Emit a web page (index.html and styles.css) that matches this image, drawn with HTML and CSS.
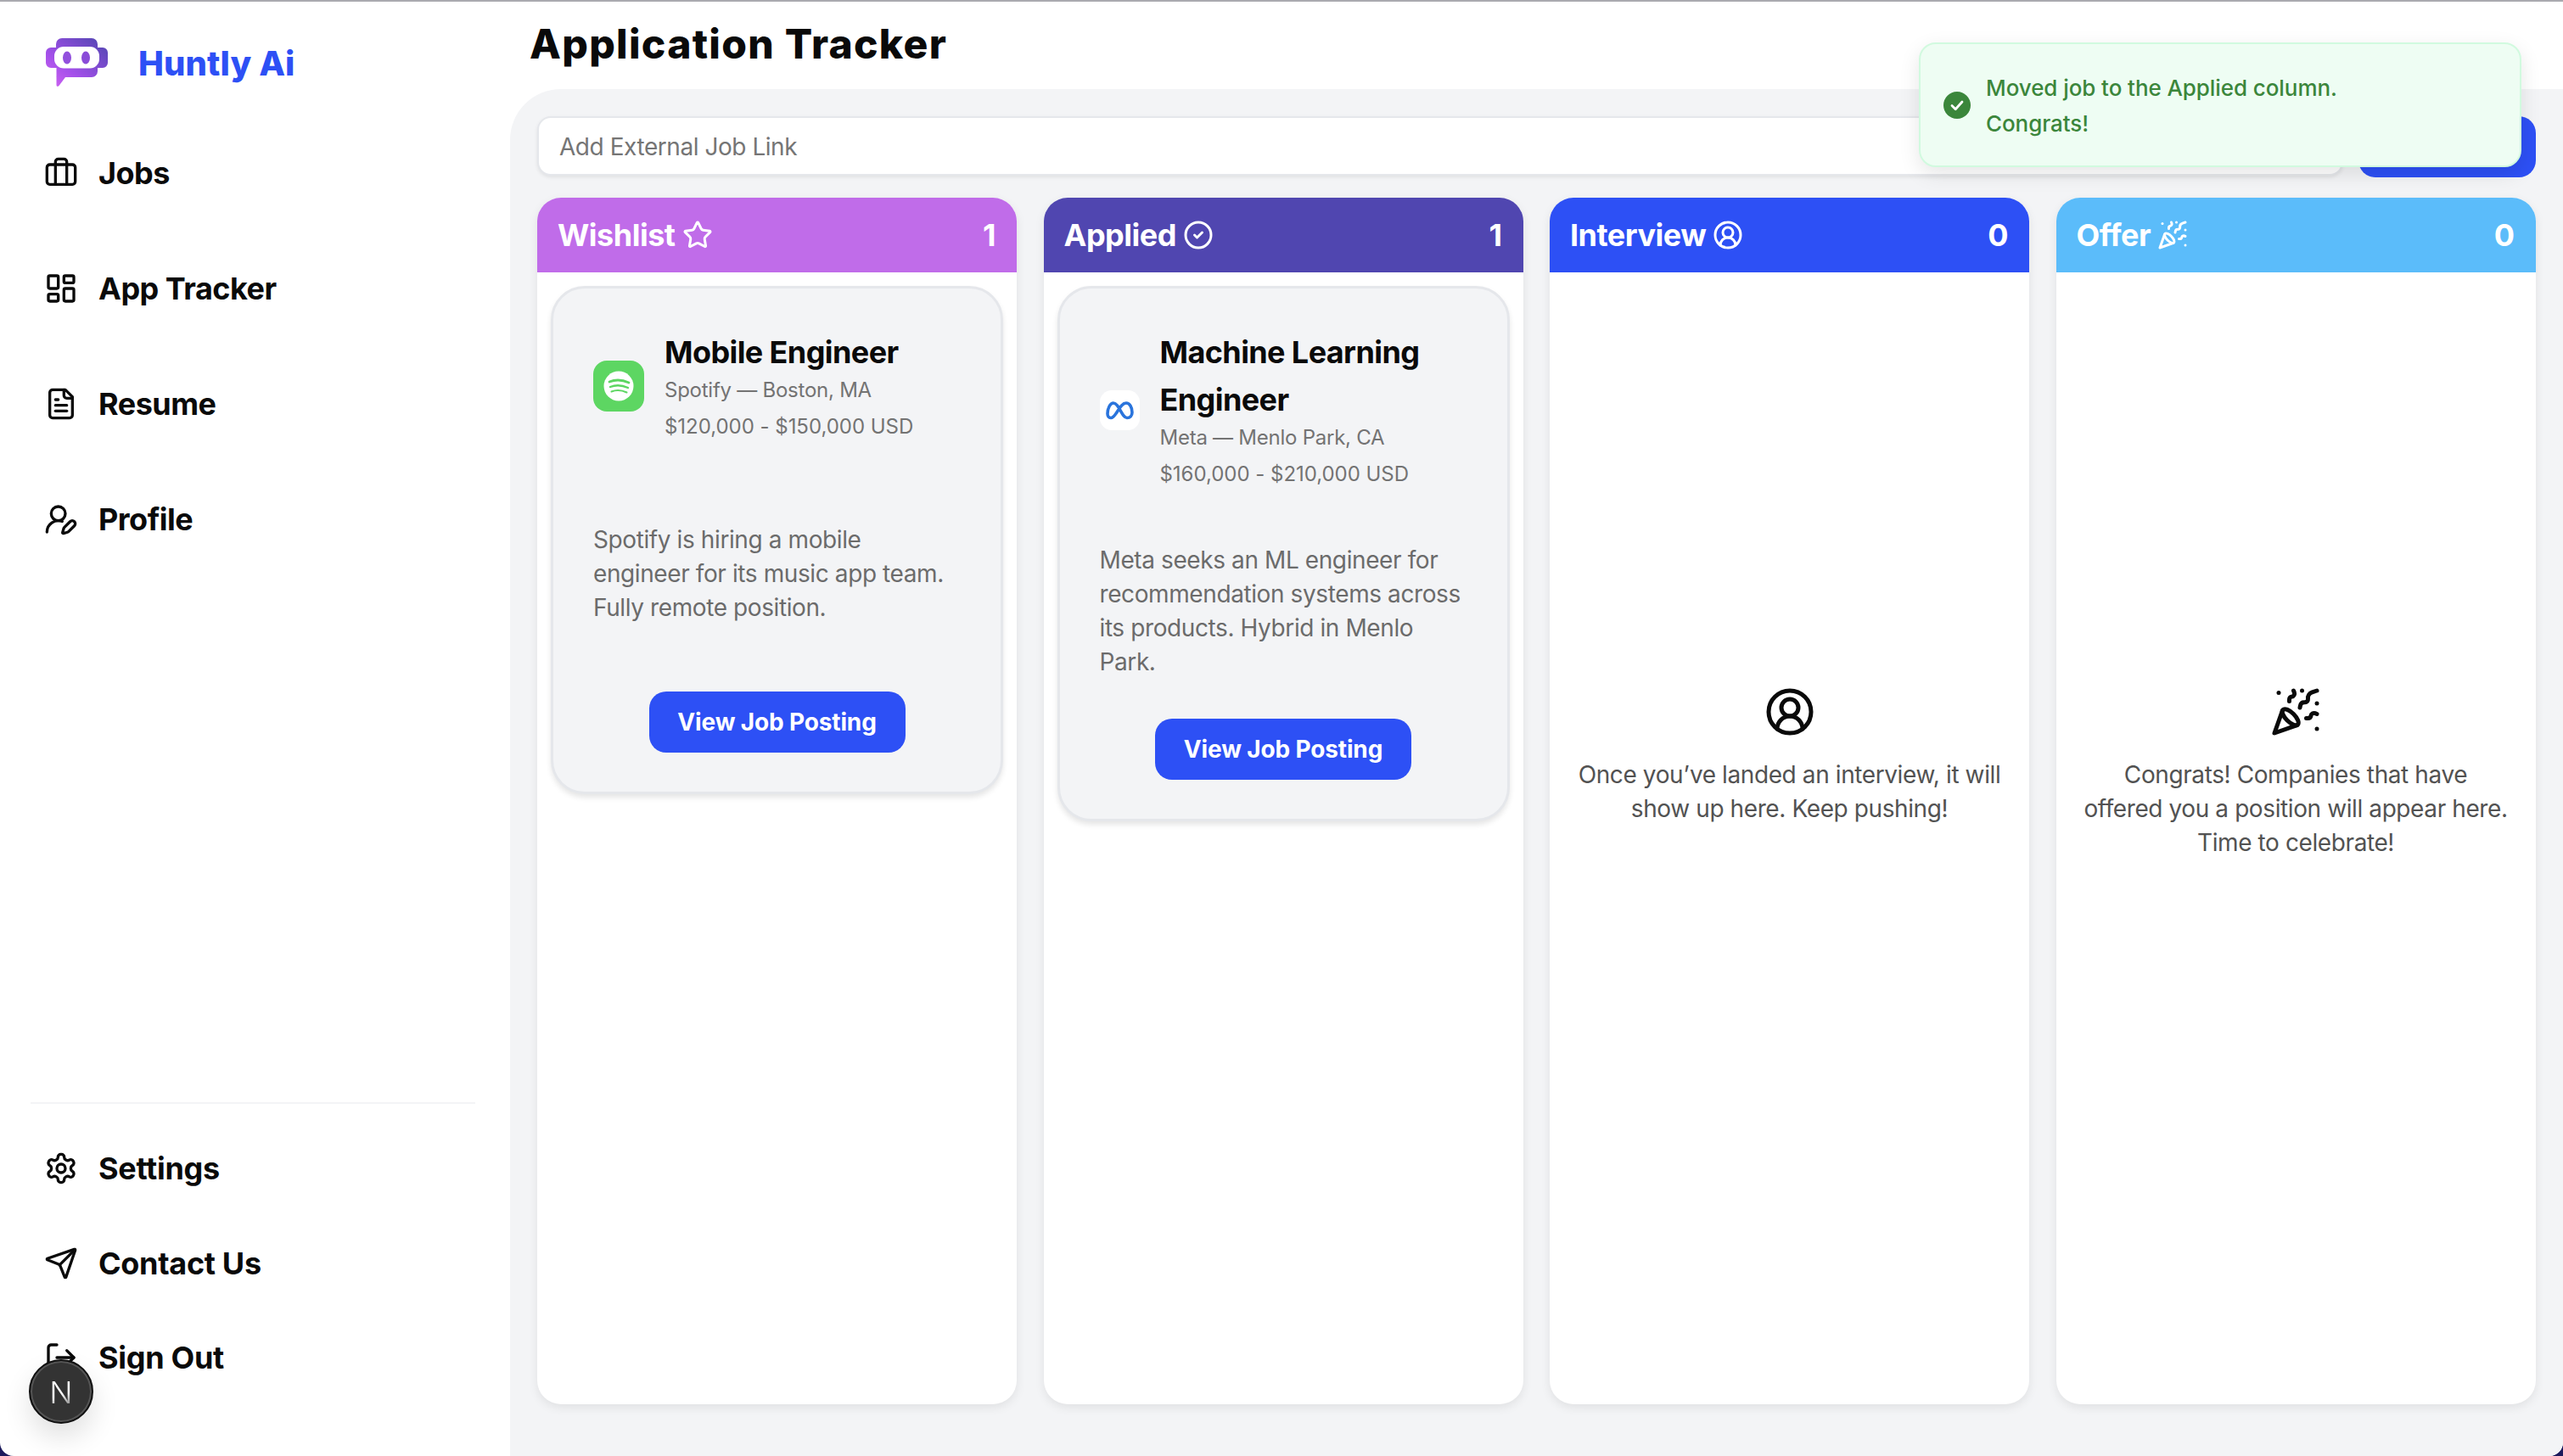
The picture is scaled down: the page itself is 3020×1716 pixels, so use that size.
FILE: index.html
```html
<!DOCTYPE html>
<html lang="en">
<head>
<meta charset="utf-8">
<title>Application Tracker</title>
<link rel="stylesheet" href="styles.css">
</head>
<body>
<div class="app">
  <aside class="sidebar">
    <div class="brand">
      <svg class="brand-logo" viewBox="0 0 74 58">
        <defs><linearGradient id="lg" x1="0" y1="1" x2="1" y2="0"><stop offset="0" stop-color="#d465f2"/><stop offset=".35" stop-color="#a450ea"/><stop offset="1" stop-color="#4d45ae"/></linearGradient></defs>
        <path fill="url(#lg)" d="M19 0h35a7 7 0 0 1 7 7v4h6a6 6 0 0 1 6 6v12a6 6 0 0 1-6 6h-6v4a7 7 0 0 1-7 7H23L15.500 56c-1.500 1.500-3 1-3-1V46a2 2 0 0 1 0-1V35H6a6 6 0 0 1-6-6V17a6 6 0 0 1 6-6h6V7a7 7 0 0 1 7-7z"/>
        <rect x="10" y="10" width="53" height="25.500" rx="11" fill="#fff"/>
        <ellipse cx="25" cy="23" rx="5" ry="7.500" fill="#9250dd"/>
        <ellipse cx="47" cy="23" rx="5" ry="7.500" fill="#8a4cd8"/>
      </svg>
      <span class="brand-name">Huntly Ai</span>
    </div>
    <nav class="nav">
      <a class="nav-item"><svg class="ico nav-ico" viewBox="0 0 24 24"><path d="M16 20V4a2 2 0 0 0-2-2h-4a2 2 0 0 0-2 2v16"/><rect width="20" height="14" x="2" y="6" rx="2"/></svg><span>Jobs</span></a>
      <a class="nav-item"><svg class="ico nav-ico" viewBox="0 0 24 24"><rect width="7" height="9" x="3" y="3" rx="1"/><rect width="7" height="5" x="14" y="3" rx="1"/><rect width="7" height="9" x="14" y="12" rx="1"/><rect width="7" height="5" x="3" y="16" rx="1"/></svg><span>App Tracker</span></a>
      <a class="nav-item"><svg class="ico nav-ico" viewBox="0 0 24 24"><path d="M15 2H6a2 2 0 0 0-2 2v16a2 2 0 0 0 2 2h12a2 2 0 0 0 2-2V7Z"/><path d="M14 2v4a2 2 0 0 0 2 2h4"/><path d="M10 9H8"/><path d="M16 13H8"/><path d="M16 17H8"/></svg><span>Resume</span></a>
      <a class="nav-item"><svg class="ico nav-ico" viewBox="0 0 24 24"><path d="M2 21a8 8 0 0 1 10.821-7.487"/><path d="M21.378 16.626a1 1 0 0 0-3.004-3.004l-4.010 4.012a2 2 0 0 0-.506.854l-.837 2.870a.5.5 0 0 0 .620.620l2.870-.837a2 2 0 0 0 .854-.506z"/><circle cx="10" cy="8" r="5"/></svg><span>Profile</span></a>
    </nav>
    <div class="sidebar-foot">
      <a class="nav-item foot-item"><svg class="ico nav-ico" viewBox="0 0 24 24"><path d="M12.220 2h-.44a2 2 0 0 0-2 2v.18a2 2 0 0 1-1 1.730l-.43.25a2 2 0 0 1-2 0l-.15-.08a2 2 0 0 0-2.730.73l-.22.38a2 2 0 0 0 .73 2.730l.15.1a2 2 0 0 1 1 1.720v.51a2 2 0 0 1-1 1.740l-.15.09a2 2 0 0 0-.73 2.730l.22.38a2 2 0 0 0 2.730.73l.15-.08a2 2 0 0 1 2 0l.43.25a2 2 0 0 1 1 1.730V20a2 2 0 0 0 2 2h.44a2 2 0 0 0 2-2v-.18a2 2 0 0 1 1-1.730l.43-.25a2 2 0 0 1 2 0l.15.08a2 2 0 0 0 2.730-.73l.22-.39a2 2 0 0 0-.73-2.730l-.15-.08a2 2 0 0 1-1-1.740v-.5a2 2 0 0 1 1-1.740l.15-.09a2 2 0 0 0 .73-2.730l-.22-.38a2 2 0 0 0-2.730-.73l-.15.08a2 2 0 0 1-2 0l-.43-.25a2 2 0 0 1-1-1.730V4a2 2 0 0 0-2-2z"/><circle cx="12" cy="12" r="3"/></svg><span>Settings</span></a>
      <a class="nav-item foot-item"><svg class="ico nav-ico" viewBox="0 0 24 24"><path d="M14.536 21.686a.5.5 0 0 0 .937-.024l6.500-19a.496.496 0 0 0-.635-.635l-19 6.500a.5.5 0 0 0-.024.937l7.930 3.180a2 2 0 0 1 1.112 1.110z"/><path d="m21.854 2.147-10.940 10.939"/></svg><span>Contact Us</span></a>
      <a class="nav-item foot-item"><svg class="ico nav-ico" viewBox="0 0 24 24"><path d="M9 21H5a2 2 0 0 1-2-2V5a2 2 0 0 1 2-2h4"/><polyline points="16 17 21 12 16 7"/><line x1="21" y1="12" x2="9" y2="12"/></svg><span>Sign Out</span></a>
    </div>
  </aside>

  <main class="main">
    <h1 class="page-title">Application Tracker</h1>
    <section class="panel">
      <form class="add-row">
        <input class="add-input" type="text" placeholder="Add External Job Link">
        <button class="add-btn" type="button">Add Job</button>
      </form>
      <div class="board">
        <section class="column">
          <header class="col-head col-wishlist">
            <span class="col-title">Wishlist <svg class="ico head-ico" viewBox="0 0 24 24"><path d="M11.525 2.295a.53.53 0 0 1 .95 0l2.310 4.679a2.123 2.123 0 0 0 1.595 1.160l5.166.756a.53.53 0 0 1 .294.904l-3.736 3.638a2.123 2.123 0 0 0-.611 1.878l.882 5.140a.53.53 0 0 1-.771.560l-4.618-2.428a2.122 2.122 0 0 0-1.973 0L6.396 21.010a.53.53 0 0 1-.770-.560l.881-5.139a2.122 2.122 0 0 0-.611-1.879L2.160 9.795a.53.53 0 0 1 .294-.906l5.165-.755a2.122 2.122 0 0 0 1.597-1.160z"/></svg></span>
            <span class="col-count">1</span>
          </header>
          <div class="col-body">
            <article class="job-card">
              <div class="job-head">
                <div class="job-row">
                  <svg class="job-logo" viewBox="0 0 60 60">
                    <rect width="60" height="60" rx="16" fill="#5dd662"/>
                    <circle cx="30" cy="30" r="17.500" fill="#fff"/>
                    <g class="spotify-arcs"><path class="arc-a" d="M19 25Q30 20.500 42 26"/><path class="arc-b" d="M20 31Q30 27 41 32"/><path class="arc-c" d="M21.500 36.500Q30 33 39.500 37.500"/></g>
                  </svg>
                  <div class="job-info">
                    <h3 class="job-title">Mobile Engineer</h3>
                    <p class="job-sub">Spotify — Boston, MA</p>
                    <p class="job-sub job-pay">$120,000 - $150,000 USD</p>
                  </div>
                </div>
              </div>
              <p class="job-desc">Spotify is hiring a mobile engineer for its music app team. Fully remote position.</p>
              <a class="job-btn">View Job Posting</a>
            </article>
          </div>
        </section>

        <section class="column">
          <header class="col-head col-applied">
            <span class="col-title">Applied <svg class="ico head-ico" viewBox="0 0 24 24"><circle cx="12" cy="12" r="10"/><path d="m9 12 2 2 4-4"/></svg></span>
            <span class="col-count">1</span>
          </header>
          <div class="col-body">
            <article class="job-card">
              <div class="job-head">
                <div class="job-row">
                  <svg class="job-logo job-logo-meta" viewBox="0 0 47 47">
                    <rect width="47" height="47" rx="14" fill="#fff"/>
                    <path class="meta-mark" d="M9 27.500c0-6 3-12.500 7-12.500 6.500 0 10 17.500 16 17.500 3.500 0 6-2.500 6-6.500 0-6-3-11-7-11-5.500 0-9 8.500-12.500 13-2 2.800-4 4.500-5.500 4.500-2.500 0-4-2-4-5z"/>
                  </svg>
                  <div class="job-info">
                    <h3 class="job-title">Machine Learning Engineer</h3>
                    <p class="job-sub">Meta — Menlo Park, CA</p>
                    <p class="job-sub job-pay">$160,000 - $210,000 USD</p>
                  </div>
                </div>
              </div>
              <p class="job-desc">Meta seeks an ML engineer for recommendation systems across its products. Hybrid in Menlo Park.</p>
              <a class="job-btn">View Job Posting</a>
            </article>
          </div>
        </section>

        <section class="column">
          <header class="col-head col-interview">
            <span class="col-title">Interview <svg class="ico head-ico" viewBox="0 0 24 24"><path d="M18 20a6 6 0 0 0-12 0"/><circle cx="12" cy="10" r="4"/><circle cx="12" cy="12" r="10"/></svg></span>
            <span class="col-count">0</span>
          </header>
          <div class="col-body col-empty">
            <svg class="ico empty-ico" viewBox="0 0 24 24"><path d="M18 20a6 6 0 0 0-12 0"/><circle cx="12" cy="10" r="4"/><circle cx="12" cy="12" r="10"/></svg>
            <p class="empty-text">Once you’ve landed an interview, it will show up here. Keep pushing!</p>
          </div>
        </section>

        <section class="column">
          <header class="col-head col-offer">
            <span class="col-title">Offer <svg class="ico head-ico" viewBox="0 0 24 24"><path d="M5.800 11.300 2 22l10.700-3.790"/><path d="M4 3h.01"/><path d="M22 8h.01"/><path d="M15 2h.01"/><path d="M22 20h.01"/><path d="m22 2-2.240.75a2.900 2.900 0 0 0-1.960 3.120c.1.860-.57 1.630-1.450 1.630h-.38c-.86 0-1.600.6-1.760 1.440L14 10"/><path d="m22 13-.82-.33c-.86-.34-1.820.2-1.980 1.110c-.11.7-.72 1.220-1.430 1.220H17"/><path d="m11 2 .33.82c.34.86-.2 1.820-1.110 1.980C9.520 4.900 9 5.520 9 6.230V7"/><path d="M11 13c1.930 1.930 2.830 4.170 2 5-.83.83-3.070-.07-5-2-1.930-1.930-2.830-4.170-2-5 .83-.83 3.070.07 5 2Z"/></svg></span>
            <span class="col-count">0</span>
          </header>
          <div class="col-body col-empty">
            <svg class="ico empty-ico" viewBox="0 0 24 24"><path d="M5.800 11.300 2 22l10.700-3.790"/><path d="M4 3h.01"/><path d="M22 8h.01"/><path d="M15 2h.01"/><path d="M22 20h.01"/><path d="m22 2-2.240.75a2.900 2.900 0 0 0-1.960 3.120c.1.860-.57 1.630-1.450 1.630h-.38c-.86 0-1.600.6-1.760 1.440L14 10"/><path d="m22 13-.82-.33c-.86-.34-1.820.2-1.980 1.110c-.11.7-.72 1.220-1.430 1.220H17"/><path d="m11 2 .33.82c.34.86-.2 1.820-1.110 1.980C9.520 4.900 9 5.520 9 6.230V7"/><path d="M11 13c1.930 1.930 2.830 4.170 2 5-.83.83-3.070-.07-5-2-1.930-1.930-2.830-4.170-2-5 .83-.83 3.070.07 5 2Z"/></svg>
            <p class="empty-text">Congrats! Companies that have offered you a position will appear here. Time to celebrate!</p>
          </div>
        </section>
      </div>
    </section>
  </main>

  <div class="toast">
    <svg class="toast-ico" viewBox="0 0 32 32"><circle cx="16" cy="16" r="16" fill="#3b863b"/><path d="M10 16.500l4.200 4.200L22 12" fill="none" stroke="#fff" stroke-width="2.800" stroke-linecap="round" stroke-linejoin="round"/></svg>
    <p class="toast-text">Moved job to the Applied column.<br>Congrats!</p>
  </div>

  <div class="dev-badge"><span class="dev-n">N</span></div>
</div>
</body>
</html>
```
FILE: styles.css
```css
* { box-sizing: border-box; }
html, body { margin: 0; padding: 0; }
body {
  width: 3020px;
  height: 1716px;
  overflow: hidden;
  background: #1c1a5c;
  font-family: Inter, "Liberation Sans", sans-serif;
  color: #0a0a0a;
}
p, h1, h3 { margin: 0; }

.app {
  position: relative;
  display: grid;
  grid-template-columns: 601px 1fr;
  height: 1716px;
  background: #fff;
  border-top: 2px solid #aaaab0;
  border-radius: 0 0 16px 16px;
  overflow: hidden;
}

/* Sidebar */
.sidebar { display: flex; flex-direction: column; padding-top: 44px; }
.brand { display: flex; align-items: center; height: 56px; padding-left: 54px; gap: 35px; }
.brand-logo { width: 74px; height: 58px; flex: none; }
.brand-name { font-size: 40px; font-weight: 800; color: #2d50f5; letter-spacing: .1px; }
.nav { margin-top: 34px; display: flex; flex-direction: column; }
.nav-item {
  display: flex;
  align-items: center;
  gap: 24px;
  height: 136px;
  padding-left: 52px;
  font-size: 36px;
  font-weight: 700;
  letter-spacing: -.5px;
  color: #0a0a0a;
}
.foot-item { height: 111.5px; letter-spacing: -.3px; }
.sidebar-foot {
  margin: auto 41px 0 36px;
  padding: 21px 0 60px;
  border-top: 2px solid #f3f4f6;
}
.sidebar-foot .nav-item { padding-left: 16px; }

.ico {
  fill: none;
  stroke: currentColor;
  stroke-width: 2;
  stroke-linecap: round;
  stroke-linejoin: round;
  flex: none;
}
.nav-ico { width: 40px; height: 40px; }

/* Main */
.main { display: flex; flex-direction: column; min-width: 0; }
.page-title {
  height: 103px;
  padding-left: 23px;
  font-size: 48px;
  line-height: 100px;
  font-weight: 800;
  letter-spacing: 1.3px;
  color: #0a0a0a;
}
.panel {
  flex: 1;
  display: flex;
  flex-direction: column;
  min-height: 0;
  padding: 32px 32px 61px;
  background: #f3f4f6;
  border-radius: 60px 0 0 0;
}
.add-row { display: flex; align-items: flex-start; gap: 18px; margin-bottom: 24px; }
.add-input {
  flex: 1;
  height: 70px;
  padding: 2px 24px 0;
  font: 400 28px Inter, sans-serif;
  letter-spacing: -.45px;
  background: #fff;
  border: 2px solid #e5e7eb;
  border-radius: 16px;
  box-shadow: 0 2px 4px rgba(0,0,0,.08);
  outline: none;
}
.add-input::placeholder { color: #757575; opacity: 1; }
.add-btn {
  width: 209px;
  height: 72px;
  border: 0;
  border-radius: 20px;
  background: #2d50f5;
  color: #fff;
  font: 600 28px Inter, sans-serif;
}

/* Board */
.board { flex: 1; display: grid; grid-template-columns: repeat(4, 565px); gap: 31.5px; min-height: 0; }
.column {
  display: flex;
  flex-direction: column;
  background: #fff;
  border-radius: 28px;
  overflow: hidden;
  box-shadow: 0 4px 12px rgba(0,0,0,.08);
}
.col-head {
  display: flex;
  align-items: center;
  justify-content: space-between;
  height: 88px;
  padding: 0 25px 0 24px;
  color: #fff;
  font-size: 36px;
  font-weight: 700;
  letter-spacing: -.5px;
  flex: none;
}
.col-title { display: flex; align-items: center; gap: 8px; }
.head-ico { width: 36px; height: 36px; }
.col-wishlist { background: #c06ce9; }
.col-applied { background: #5046b0; }
.col-interview { background: #2d50f5; }
.col-offer { background: #5bbcfa; }
.col-body { flex: 1; padding: 16px 16px 0; }
.col-empty {
  display: flex;
  flex-direction: column;
  align-items: center;
  padding: 488px 32px 0;
}
.empty-ico { width: 60px; height: 60px; color: #0a0a0a; }
.empty-text { margin-top: 24px; font-size: 28px; line-height: 40px; letter-spacing: -.4px; text-align: center; color: #525252; }

/* Job card */
.job-card {
  display: flex;
  flex-direction: column;
  padding: 47px 47px 46px;
  background: #f3f4f6;
  border: 3px solid #e5e7eb;
  border-radius: 40px;
  box-shadow: 0 4px 6px rgba(0,0,0,.1);
}
.job-head { min-height: 168px; }
.job-row { display: flex; align-items: center; gap: 25px; }
.job-logo { width: 60px; height: 60px; flex: none; }
.job-logo-meta { width: 47px; height: 47px; }
.spotify-arcs { fill: none; stroke: #5dd662; stroke-linecap: round; }
.arc-a { stroke-width: 2.8; }
.arc-b { stroke-width: 2.4; }
.arc-c { stroke-width: 2; }
.meta-mark { fill: none; stroke: #2a74dc; stroke-width: 3.6; stroke-linejoin: round; }
.job-info { min-width: 0; flex: 1; margin-left: -1px; }
.job-title { font-size: 36px; line-height: 56px; font-weight: 700; letter-spacing: -.6px; color: #0a0a0a; }
.job-sub { font-size: 24px; line-height: 34px; letter-spacing: -.25px; color: #737373; }
.job-pay { margin-top: 9px; padding-bottom: 3px; letter-spacing: -.03px; }
.job-desc { margin: 61px 0 47px; min-height: 152px; font-size: 28px; line-height: 40px; letter-spacing: -.4px; color: #6b6b6b; }
.job-btn {
  align-self: center;
  display: flex;
  align-items: center;
  justify-content: center;
  width: 302px;
  height: 72px;
  border-radius: 20px;
  background: #2d50f5;
  color: #fff;
  font-size: 28px;
  font-weight: 700;
  letter-spacing: -.15px;
}

/* Toast */
.toast {
  position: absolute;
  left: 2261px;
  top: 48px;
  width: 710px;
  height: 147px;
  display: flex;
  align-items: center;
  gap: 18px;
  padding-left: 27px;
  background: #eefdf3;
  border: 2px solid #d1fadf;
  border-radius: 20px;
  box-shadow: 0 8px 24px rgba(0,0,0,.1);
}
.toast-ico { width: 32px; height: 32px; flex: none; }
.toast-text { padding-top: 2px; font-size: 26px; line-height: 42px; font-weight: 500; letter-spacing: -.08px; color: #3b863b; }

/* Dev badge */
.dev-badge {
  position: absolute;
  left: 34px;
  top: 1600px;
  width: 76px;
  height: 76px;
  display: flex;
  align-items: center;
  justify-content: center;
  padding-top: 2px;
  border-radius: 50%;
  background: #333;
  border: 2px solid #111;
  box-shadow: inset 0 0 0 2px #555, 0 16px 32px rgba(0,0,0,.12);
}
.dev-n {
  font-size: 36px;
  font-weight: 300;
  line-height: 1;
  color: transparent;
  background: linear-gradient(160deg, #fff 55%, #777 95%);
  -webkit-background-clip: text;
  background-clip: text;
}
```
